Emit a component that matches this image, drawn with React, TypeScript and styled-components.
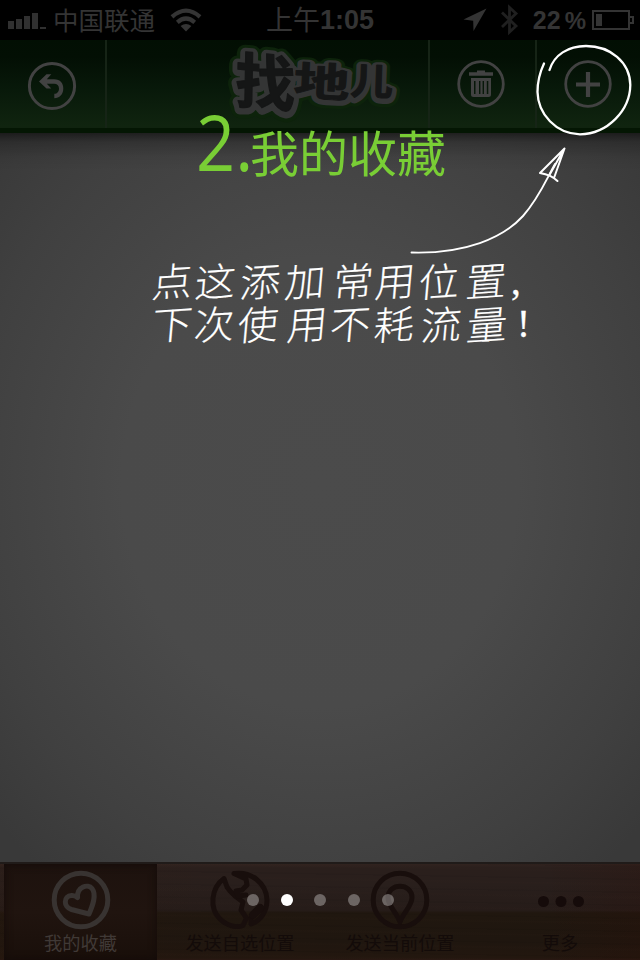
import React from "react";
import styled, { createGlobalStyle } from "styled-components";

const CJK = `"Noto Sans CJK SC", sans-serif`;

const Global = createGlobalStyle`
  body { margin: 0; background: #000; }
  * { box-sizing: border-box; }
`;

const Screen = styled.div`
  position: relative;
  width: 640px;
  height: 960px;
  overflow: hidden;
  display: flex;
  flex-direction: column;
  font-family: ${CJK};
`;

const StatusBar = styled.header`
  height: 40px;
  flex: none;
  background: #000;
  color: #343434;
  display: grid;
  grid-template-columns: 1fr 160px 1fr;
  align-items: center;
`;

const StatusLeft = styled.div`
  display: flex;
  align-items: center;
  height: 40px;
  padding-left: 8px;
`;

const Bars = styled.div`
  display: flex;
  align-items: flex-end;
  gap: 2px;
  height: 16px;
  margin: 1px 7px 0 0;
`;

const Bar = styled.i<{ $h: number }>`
  width: 6px;
  height: ${(p) => p.$h}px;
  background: #303030;
`;

const Carrier = styled.span`
  font-size: 25.5px;
  line-height: 38px;
  height: 40px;
  margin-right: 14px;
`;

const Clock = styled.div`
  display: flex;
  justify-content: center;
  font-size: 27px;
  line-height: 38px;
  height: 40px;
  white-space: nowrap;
  b {
    font: bold 27px/40px "Liberation Sans", sans-serif;
  }
`;

const StatusRight = styled.div`
  display: flex;
  align-items: center;
  justify-content: flex-end;
  height: 40px;
  padding-right: 5px;
`;

const LocationIcon = styled.svg`
  margin-right: 3px;
`;

const BluetoothIcon = styled.svg`
  margin: 0 14px 0 11px;
`;

const Charge = styled.b`
  font: bold 25px/39px "Liberation Sans", sans-serif;
`;

const Percent = styled.span`
  font: bold 24px/39px "Liberation Sans", sans-serif;
  margin: 0 6px 0 4px;
`;

const NavBar = styled.nav`
  height: 93px;
  flex: none;
  display: grid;
  grid-template-columns: 105px 323px 107px 105px;
  background: linear-gradient(#020f03 0, #030f04 17px, #08190a 50px, #10240f 86px, #10230f 88px, #041603 88px, #041603 93px);
`;

const NavCell = styled.div<{ $line?: boolean; $before?: number; $after?: number }>`
  height: 88px;
  border-left: ${(p) => (p.$line ? "2px solid #162416" : "0")};
  display: flex;
  justify-content: center;
  padding: 0 ${(p) => p.$after || 0}px 0 ${(p) => p.$before || 0}px;
`;

const NavIcon = styled.svg`
  display: block;
  margin-top: 18px;
  flex: none;
`;

const LogoArt = styled.svg`
  display: block;
  flex: none;
  overflow: visible;
  font-family: ${CJK};
  font-weight: 700;
`;

const Content = styled.main`
  flex: 1;
  background:
    linear-gradient(rgba(0, 0, 0, 0.52), rgba(0, 0, 0, 0.22) 9px, rgba(0, 0, 0, 0.05) 24px, transparent 38px),
    radial-gradient(ellipse 440px 500px at 320px 350px, #4b4b4b 0, #4a4a4a 45%, #404040 80%, #393939 100%);
`;

const TabBar = styled.footer`
  height: 98px;
  flex: none;
  display: grid;
  grid-template-columns: repeat(4, 160px);
  border-top: 2px solid #201b19;
  background:
    repeating-linear-gradient(1deg, rgba(0, 0, 0, 0.05) 0 1px, transparent 2px 7px, rgba(70, 45, 35, 0.04) 8px 9px, transparent 10px 13px),
    linear-gradient(90deg, rgba(52, 24, 8, 0.12), transparent 35%, transparent 85%, rgba(45, 12, 5, 0.2)),
    linear-gradient(#31231f 0, #2a1f1c 4px, #291f1c 20px, #261c19 46px, #20170f 49px, #1f160f 78px, #23170f 94px, #2a1813 96px);
`;

const Tab = styled.div<{ $active?: boolean }>`
  display: flex;
  flex-direction: column;
  align-items: center;
  margin: 0 ${(p) => (p.$active ? "3px 0 4px" : "0")};
  color: ${(p) => (p.$active ? "#403936" : "#130b09")};
  background: ${(p) => (p.$active ? "linear-gradient(#1d120e, #20140f 50%, #190f0a)" : "none")};
  box-shadow: ${(p) => (p.$active ? "inset 0 0 8px #140b09" : "none")};
  padding-top: 6px;
`;

const TabIcon = styled.svg`
  display: block;
  overflow: visible;
  flex: none;
`;

const TabLabel = styled.span`
  font-size: 18.2px;
  line-height: 25px;
  white-space: nowrap;
`;

const Guide = styled.section`
  position: absolute;
  inset: 0;
  pointer-events: none;
`;

const Title = styled.h1`
  position: absolute;
  left: 196px;
  top: 103px;
  margin: 0;
  display: flex;
  color: #79ce35;
  font-weight: 400;
  white-space: nowrap;
`;

const TitleNumber = styled.span`
  width: 54px;
  font: 400 77px/78px "Open Sans", sans-serif;
  transform: scaleX(0.89);
  transform-origin: 0 0;
`;

const TitleText = styled.span`
  font-size: 49px;
  line-height: 74px;
  margin-top: 11px;
`;

const Note = styled.div`
  position: absolute;
  left: 153px;
  top: 258px;
  color: #fff;
`;

const NoteLine = styled.p`
  margin: 0;
  height: 43px;
  line-height: 43px;
  font-size: 39px;
  font-weight: 300;
  display: flex;
`;

const Stroke = styled.span<{ $w: number; $mark?: boolean }>`
  flex: none;
  width: ${(p) => p.$w}px;
  font-family: ${(p) => (p.$mark ? `"Liberation Serif", serif` : CJK)};
  font-weight: ${(p) => (p.$mark ? 400 : 300)};
  transform: ${(p) => (p.$mark ? "translateY(1px)" : "skew(-5deg, -4deg) scaleX(1.04)")};
  -webkit-text-stroke: ${(p) => (p.$mark ? "0.3px" : "0.15px")} #fff;
`;

const Sketch = styled.svg`
  position: absolute;
  left: 400px;
  top: 40px;
`;

const Dots = styled.div`
  position: absolute;
  left: 247px;
  top: 894px;
  display: flex;
  gap: 21.7px;
`;

const Dot = styled.i<{ $on?: boolean }>`
  width: 12px;
  height: 12px;
  border-radius: 50%;
  background: ${(p) => (p.$on ? "#fff" : "rgba(255,255,255,.32)")};
`;

const LOGO = [
  { c: "找", place: "translate(23 62) rotate(5) skewX(4)", s: 60, k: 1 },
  { c: "地", place: "translate(81 55) rotate(3) scale(1.4 1)", s: 40, k: 0.75 },
  { c: "儿", place: "translate(138 54) rotate(2) scale(1.15 1)", s: 37, k: 0.8 },
];

const LOGO_LAYERS = [
  { color: "#0d230b", w: 18, dy: 2 },
  { color: "#343535", w: 11, dy: 1.5 },
  { color: "#151616", w: 1.2, dy: 0 },
];

const Logo = () => (
  <LogoArt width="200" height="88" viewBox="0 0 200 88">
    {LOGO_LAYERS.map((l) => (
      <g key={l.color} fill={l.color} stroke={l.color} strokeLinejoin="round" transform={`translate(0 ${l.dy})`}>
        {LOGO.map((g) => (
          <text key={g.c} fontSize={g.s} strokeWidth={l.w * g.k} transform={g.place}>
            {g.c}
          </text>
        ))}
      </g>
    ))}
  </LogoArt>
);

const Ring = () => <circle cx="26" cy="26" r="22.3" fill="none" stroke="#424242" strokeWidth="2.8" />;

const NOTES: [string, number][][] = [
  [["点", 43], ["这", 45], ["添", 45], ["加", 48], ["常", 42], ["用", 44], ["位", 47], ["置", 44], [",", 14]],
  [["下", 42], ["次", 44], ["使", 49], ["用", 43], ["不", 44], ["耗", 47], ["流", 46], ["量", 49], ["!", 14]],
];

export default function App() {
  return (
    <Screen>
      <Global />
      <StatusBar>
        <StatusLeft>
          <Bars>
            {[8, 10, 13, 16, 2].map((h) => (
              <Bar key={h} $h={h} />
            ))}
          </Bars>
          <Carrier>中国联通</Carrier>
          <svg width="34" height="26" viewBox="0 0 34 26" fill="none" stroke="#343434" strokeWidth="4.2">
            <path d="M3 9.8Q17 -2.5 31 9.8M8.3 15.3Q17 7.8 25.7 15.3" />
            <path d="M11.6 19Q17 14.8 22.4 19L17 24.5Z" fill="#343434" stroke="none" />
          </svg>
        </StatusLeft>
        <Clock>
          上午<b>1:05</b>
        </Clock>
        <StatusRight>
          <LocationIcon width="24" height="24" viewBox="0 0 24 24">
            <path d="M23.5 0.5 10.5 23 10.2 12.8 0.5 11.5Z" fill="#343434" />
          </LocationIcon>
          <BluetoothIcon width="18" height="32" viewBox="0 0 18 32" fill="none" stroke="#202020" strokeWidth="2.8">
            <path d="M1 8.5 15 22 8.5 28V3.5L15 9.5 1 23" />
          </BluetoothIcon>
          <Charge>22</Charge>
          <Percent>%</Percent>
          <svg width="43" height="20" viewBox="0 0 43 20">
            <rect x="1" y="1" width="36" height="18" fill="none" stroke="#343434" strokeWidth="2" />
            <rect x="4" y="4" width="6" height="12" fill="#343434" />
            <path d="M38 7H41V13H38" fill="none" stroke="#343434" strokeWidth="2" />
          </svg>
        </StatusRight>
      </StatusBar>

      <NavBar>
        <NavCell $after={1}>
          <NavIcon width="52" height="54" viewBox="0 -2 52 54">
            <circle cx="26" cy="26" r="22.6" fill="none" stroke="#424242" strokeWidth="3" />
            <path
              d="M13 21.5 20.5 14.2H25.3L20.8 19.3H28C34.5 19.3 37.3 23.5 37.3 28.5C37.3 34.5 33.5 38.2 28.3 38.2V33.8C31.2 33.8 33 31.7 33 28.8C33 25.6 31.1 23.8 28 23.8H20.8L25.3 28.5H20.5Z"
              fill="#424242"
            />
          </NavIcon>
        </NavCell>
        <NavCell $line $before={89}>
          <Logo />
        </NavCell>
        <NavCell $line $after={4}>
          <NavIcon width="52" height="52" viewBox="0 0 52 52">
            <Ring />
            <path d="M14 16H38M22 14.2H30" stroke="#424242" strokeWidth="3.6" />
            <path
              d="M16 20V36.5Q16 39 18.5 39H33.5Q36 39 36 36.5V20ZM19 23V36H20.5V23ZM24 23V36H25.4V23ZM27.6 23V36H29V23ZM31.8 23V36H33.3V23Z"
              fillRule="evenodd"
              fill="#424242"
            />
          </NavIcon>
        </NavCell>
        <NavCell $line $after={2}>
          <NavIcon width="52" height="52" viewBox="0 0 52 52">
            <Ring />
            <path d="M26 14V39M14 26.5H38" stroke="#424242" strokeWidth="4.2" />
          </NavIcon>
        </NavCell>
      </NavBar>

      <Content />

      <TabBar>
        <Tab $active>
          <TabIcon width="60" height="60" viewBox="0 0 60 60" fill="none" stroke="#383331" strokeWidth="5">
            <circle cx="30" cy="30" r="26.8" />
            <path
              d="M38 44 20.5 39.5C12 37 12.5 26 20.5 25.5Q24 25.3 26.5 27.5C26 16.5 37 13.5 41 18.5C46 25 41.5 36 38 44Z"
              strokeLinejoin="round"
            />
          </TabIcon>
          <TabLabel>我的收藏</TabLabel>
        </Tab>
        <Tab>
          <TabIcon width="60" height="60" viewBox="0 0 60 60" fill="none" stroke="#180e0c" strokeWidth="5" strokeLinecap="round" strokeLinejoin="round">
            <path d="M14 8.5C1 18-1 38 10 49C17 56 27 58 33 55.5L36.5 48 31 40 33 32 25 26 20 21 17 17Z" />
            <path d="M24 3.5C41 1 56.5 13 57 30C57 42 50 51 41 54L41 48 51 37M24 3.5 36 9 37 15 32 20 26 21 28 26 36 25" />
            <path d="M43 45 50 38" strokeWidth="8" />
          </TabIcon>
          <TabLabel>发送自选位置</TabLabel>
        </Tab>
        <Tab>
          <TabIcon width="60" height="60" viewBox="0 0 60 60" fill="none" stroke="#180e0c" strokeWidth="5">
            <circle cx="30" cy="30" r="26.8" />
            <path d="M30 52C27 43 18 36 18 27.5C18 12.5 42 12.5 42 27.5C42 36 33 43 30 52Z" strokeLinejoin="round" />
          </TabIcon>
          <TabLabel>发送当前位置</TabLabel>
        </Tab>
        <Tab>
          <TabIcon width="60" height="60" viewBox="0 0 60 60" fill="#150b0a">
            <circle cx="13.5" cy="31.5" r="5.5" />
            <circle cx="31" cy="31.5" r="5.5" />
            <circle cx="48.5" cy="31.5" r="5.5" />
          </TabIcon>
          <TabLabel>更多</TabLabel>
        </Tab>
      </TabBar>

      <Guide>
        <Title>
          <TitleNumber>2.</TitleNumber>
          <TitleText>我的收藏</TitleText>
        </Title>
        <Note>
          {NOTES.map((line, i) => (
            <NoteLine key={i}>
              {line.map(([c, w], n) => (
                <Stroke key={n} $w={w} $mark={c === "," || c === "!"}>
                  {c}
                </Stroke>
              ))}
            </NoteLine>
          ))}
        </Note>
        <Sketch width="240" height="220" viewBox="400 40 240 220" fill="none" stroke="#fff" strokeLinecap="round" strokeLinejoin="round">
          <path
            d="M549.5 70C554 55 568 46 586 46C610 46 630 62 630.3 85C630 110 608 134 580 134.3C556 134 538 114 537.5 92C537.5 82 540 72 544 63.5"
            strokeWidth="2.3"
          />
          <path d="M411.5 252.5C465 254 503 238 523 216C539 198 546 180 555 164" strokeWidth="1.9" />
          <path d="M564.5 148.5 540 173C546 174 552 175.5 557.5 181M564.5 148.5 554 178M563 151 550 174" strokeWidth="2" />
        </Sketch>
        <Dots>
          <Dot />
          <Dot $on />
          <Dot />
          <Dot />
          <Dot />
        </Dots>
      </Guide>
    </Screen>
  );
}
